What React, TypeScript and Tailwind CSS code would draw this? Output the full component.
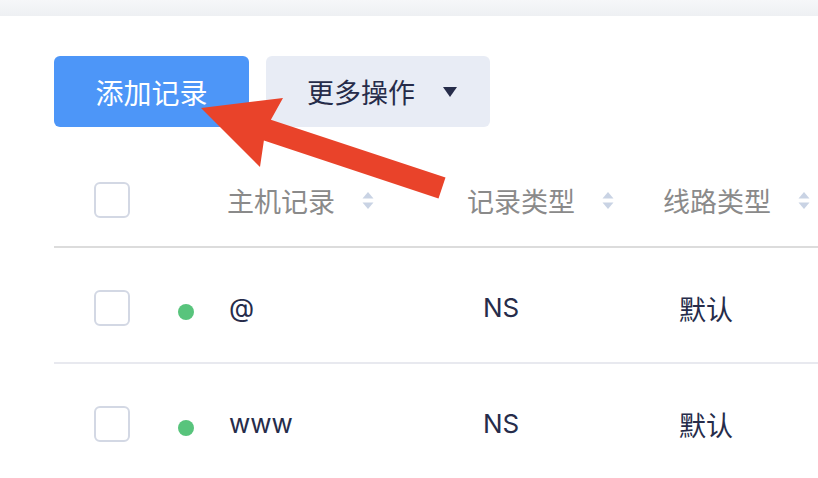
import React from "react";

const cjk = { fontFamily: '"Noto Sans CJK SC", "Noto Sans", sans-serif' };

function SortIcon() {
  return (
    <svg width="12" height="19" viewBox="0 0 12 19" className="shrink-0">
      <path d="M6 1 L11.5 7.5 L0.5 7.5 Z" fill="#c9d3e4" />
      <path d="M6 18 L11.5 11.5 L0.5 11.5 Z" fill="#c9d3e4" />
    </svg>
  );
}

function CheckBox() {
  return <div className="w-[36px] h-[36px] rounded-[6px] border-2 border-[#d3d8e4] bg-white shrink-0" />;
}

function HeaderCell({ label, width }: { label: string; width: string }) {
  return (
    <div className={`${width} flex items-center gap-[27px] shrink-0`}>
      <span className="text-[27px] leading-none text-[#8a8a8a]">{label}</span>
      <SortIcon />
    </div>
  );
}

const rows = [
  { host: "@", type: "NS", line: "默认" },
  { host: "www", type: "NS", line: "默认" },
];

export default function App() {
  return (
    <div className="relative w-[818px] h-[478px] overflow-hidden bg-white" style={cjk}>
      {/* 顶部灰条 */}
      <div className="h-[16px] bg-gradient-to-b from-[#f6f7f9] to-[#eef0f3]" />

      <div className="pl-[54px] pt-[40px]">
        {/* 按钮 */}
        <div className="flex gap-[17px]">
          <button className="w-[195px] h-[71px] rounded-[6px] bg-[#4d96f8] text-white text-[28px] leading-none flex items-center justify-center">
            添加记录
          </button>
          <button className="w-[224px] h-[71px] rounded-[6px] bg-[#e8ecf5] text-[#262c4a] text-[27px] leading-none flex items-center pl-[41px]">
            更多操作
            <svg width="14" height="10" viewBox="0 0 14 10" className="ml-[28px]">
              <path d="M0 0 H14 L7 10 Z" fill="#262c4a" />
            </svg>
          </button>
        </div>

        {/* 表头 */}
        <div className="mt-[37px] h-[84px] pb-[10px] flex items-center border-b-2 border-[#dcdcdc]">
          <div className="w-[76px] pl-[40px] shrink-0">
            <CheckBox />
          </div>
          <div className="w-[97px] shrink-0" />
          <HeaderCell label="主机记录" width="w-[240px]" />
          <HeaderCell label="记录类型" width="w-[196px]" />
          <HeaderCell label="线路类型" width="w-[200px]" />
        </div>

        {/* 数据行 */}
        {rows.map((r) => (
          <div
            key={r.host}
            className="h-[116px] pt-[6px] flex items-center border-b-2 border-[#e8e9ef] text-[#262c4a]"
          >
            <div className="w-[76px] pl-[40px] shrink-0">
              <CheckBox />
            </div>
            <div className="w-[97px] pl-[48px] shrink-0 pt-[8px]">
              <div className="w-[16px] h-[16px] rounded-full bg-[#58c47c]" />
            </div>
            <div className="w-[240px] pl-[2px] shrink-0 text-[26px] leading-none" style={{ fontFamily: "Inter, sans-serif" }}>
              {r.host}
            </div>
            <div className="w-[196px] pl-[16px] shrink-0 text-[26px] leading-none" style={{ fontFamily: "Inter, sans-serif" }}>
              {r.type}
            </div>
            <div className="w-[150px] pl-[16px] shrink-0 text-[27px] leading-none">{r.line}</div>
          </div>
        ))}
      </div>

      {/* 红色箭头 */}
      <svg className="absolute top-0 left-0 pointer-events-none" width="818" height="478" viewBox="0 0 818 478">
        <polygon
          points="201,108 283,98 270.9,119.7 445.5,177.6 438.5,198.4 263.9,140.5 260,167"
          fill="#e9432a"
        />
      </svg>
    </div>
  );
}
